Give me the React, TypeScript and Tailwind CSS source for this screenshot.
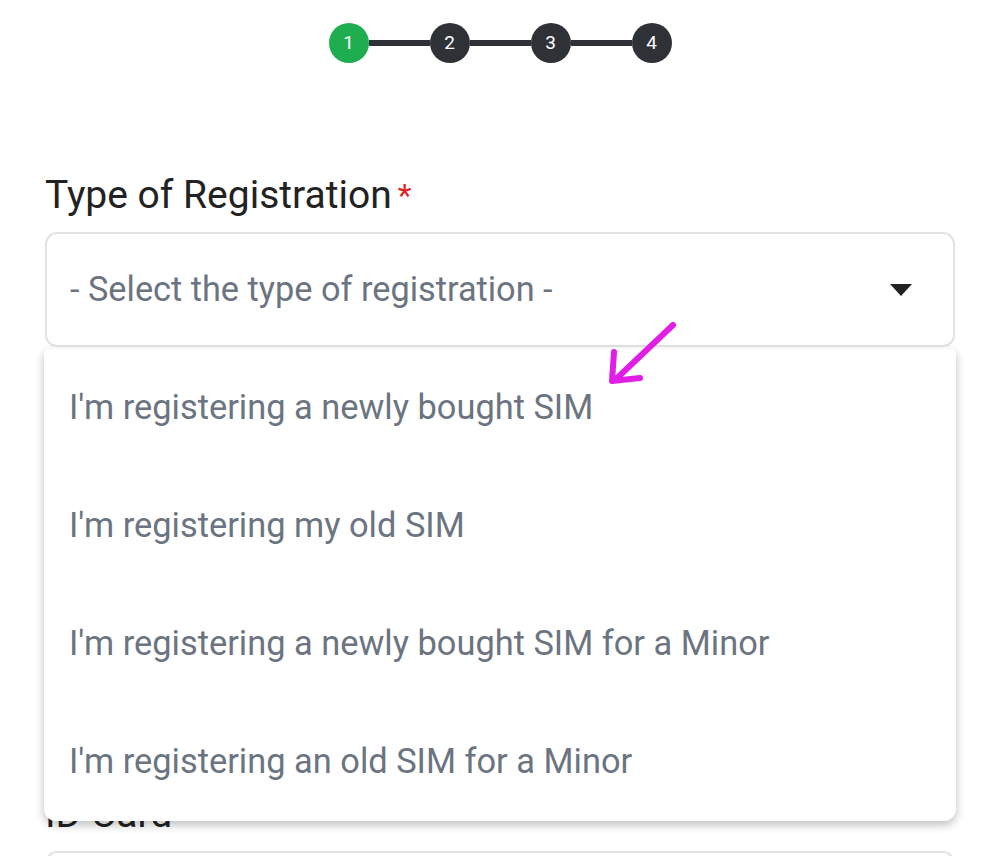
import React from "react";

const steps = [1, 2, 3, 4];

const options = [
  "I'm registering a newly bought SIM",
  "I'm registering my old SIM",
  "I'm registering a newly bought SIM for a Minor",
  "I'm registering an old SIM for a Minor",
];

function Stepper() {
  return (
    <div className="flex items-center justify-center pt-[23px]">
      {steps.map((s, i) => (
        <div key={s} className="flex items-center">
          {i > 0 && <div className="w-[61px] h-[6px] bg-[#2e3136]" />}
          <div
            className={
              "w-[40px] h-[40px] rounded-full flex items-center justify-center text-white text-[19px] " +
              (i === 0 ? "bg-[#1fae4f]" : "bg-[#2e3136]")
            }
          >
            {s}
          </div>
        </div>
      ))}
    </div>
  );
}

export default function App() {
  return (
    <div className="w-[1000px] h-[856px] overflow-hidden bg-white font-['Roboto',sans-serif] relative">
      <Stepper />

      <div className="px-[45px] mt-[104px]">
        {/* registration type */}
        <label className="block text-[39px] leading-[56px] text-[#222]">
          Type of Registration<span className="text-[#e02424] text-[32px] align-top ml-[6px]">*</span>
        </label>
        <div className="relative mt-[9px]">
          <div className="h-[115px] border-2 border-[#e2e2e2] rounded-[12px] flex items-center justify-between pl-[23px] pr-[40px]">
            <span className="text-[34.3px] text-[#6b7480]">- Select the type of registration -</span>
            <svg width="24" height="14" viewBox="0 0 24 14">
              <path d="M1 1h22L12 13z" fill="#222" />
            </svg>
          </div>

          {/* open dropdown */}
          <div className="absolute z-10 left-[-1px] right-[-1px] top-[117px] bg-white rounded-b-[12px] rounded-t-[4px] shadow-[0_4px_10px_rgba(0,0,0,0.25)]">
            {options.map((o) => (
              <div key={o} className="h-[118px] flex items-center pl-[25px] text-[34.4px] text-[#6b7480]">
                {o}
              </div>
            ))}
          </div>

          {/* annotation arrow */}
          <svg className="absolute z-20 left-[560px] top-[86px]" width="80" height="74" viewBox="0 0 80 74">
            <path
              d="M68 7L10 62M9 34L7 63L35 60"
              fill="none"
              stroke="#e01ee6"
              strokeWidth="6"
              strokeLinecap="round"
              strokeLinejoin="round"
            />
          </svg>
        </div>

        {/* id card */}
        <label className="block text-[39px] leading-[56px] text-[#222] mt-[439px]">ID Card</label>
        <div className="h-[115px] border-2 border-[#e2e2e2] rounded-[12px] mt-[9px]" />
      </div>
    </div>
  );
}
